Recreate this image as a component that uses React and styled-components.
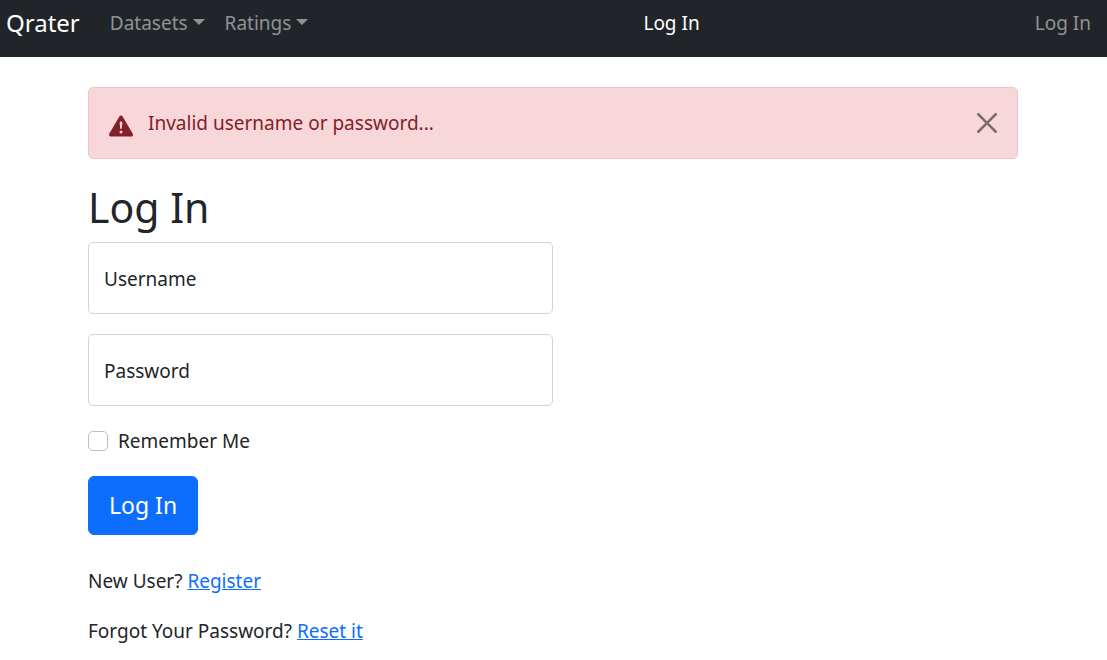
import React from "react";
import styled, { createGlobalStyle } from "styled-components";

const GlobalStyle = createGlobalStyle`
  *, *::before, *::after { box-sizing: border-box; }
  body {
    margin: 0;
    background: #fff;
    color: #212529;
    font-family: "Noto Sans", "Open Sans", sans-serif;
    font-size: 19px;
    line-height: 30px;
  }
  button, input { font: inherit; }
`;

const Navbar = styled.nav`
  display: flex;
  justify-content: space-between;
  align-items: flex-start;
  height: 57px;
  padding: 8px 6px;
  background: #212529;
`;

const NavGroup = styled.div`
  display: flex;
  align-items: center;
`;

const Brand = styled.a`
  margin-right: 20px;
  color: #fff;
  font-size: 24px;
  text-decoration: none;
`;

const NavLink = styled.a`
  padding: 0 10px;
  color: ${({ $active }) => ($active ? "#fff" : "#909294")};
  text-decoration: none;
`;

const NavToggle = styled.button`
  display: flex;
  align-items: center;
  gap: 5px;
  padding: 0 10px;
  border: 0;
  background: none;
  color: #909294;

  &::after {
    content: "";
    margin-bottom: 2px;
    border-top: 6px solid;
    border-right: 6px solid transparent;
    border-left: 6px solid transparent;
  }
`;

const Container = styled.main`
  max-width: 961px;
  margin: 0 auto;
  padding: 30px 16px 0 15px;
`;

const Alert = styled.div`
  display: flex;
  align-items: center;
  gap: 15px;
  padding: 20px;
  border: 1px solid #f5c2c7;
  border-radius: 5px;
  background: #f8d7da;
  color: #842029;

  > svg { flex: none; margin-top: 6px; }
`;

const CloseButton = styled.button`
  display: flex;
  margin-left: auto;
  padding: 0;
  border: 0;
  background: none;
  color: #000;
  opacity: 0.5;
`;

const Title = styled.h1`
  margin: 20px 0 7px;
  font-size: 41px;
  font-weight: 400;
  line-height: 56px;
`;

const Form = styled.form`
  width: 50%;
  min-width: 280px;
`;

const Field = styled.div`
  display: grid;
  margin-bottom: 20px;
  > * { grid-area: 1 / 1; }
`;

const FieldLabel = styled.label`
  align-self: center;
  padding: 2px 16px 0;
  pointer-events: none;
`;

const TextInput = styled.input`
  width: 100%;
  height: 72px;
  padding: 20px 15px;
  border: 1px solid #ced4da;
  border-radius: 5px;
  background: #fff;
  color: #212529;
`;

const CheckRow = styled.div`
  display: flex;
  align-items: center;
  gap: 10px;
`;

const Checkbox = styled.input`
  appearance: none;
  width: 20px;
  height: 20px;
  margin: 0;
  border: 1px solid #bfbfbf;
  border-radius: 5px;
  background: #fff;

  &:checked { background: #0d6efd; }
`;

const SubmitButton = styled.button`
  margin: 20px 0 31px;
  padding: 10px 20px;
  border: 1px solid #0d6efd;
  border-radius: 6px;
  background: #0d6efd;
  color: #fff;
  font-size: 23px;
  line-height: 37px;
`;

const Hint = styled.p`
  margin: 0;

  & + & { margin-top: 20px; }
`;

const TextLink = styled.a`
  color: #0d6efd;
  text-decoration: underline;
`;

function WarningIcon() {
  return (
    <svg width="24" height="24" viewBox="0 0 16 16" fill="currentColor" aria-hidden="true">
      <path d="M8.982 1.566a1.13 1.13 0 0 0-1.96 0L.165 13.233c-.457.778.091 1.767.98 1.767h13.713c.889 0 1.438-.99.98-1.767L8.982 1.566zM8 5c.535 0 .954.462.9.995l-.35 3.507a.552.552 0 0 1-1.1 0L7.1 5.995A.905.905 0 0 1 8 5zm.002 6a1 1 0 1 1 0 2 1 1 0 0 1 0-2z" />
    </svg>
  );
}

function CloseIcon() {
  return (
    <svg width="20" height="20" viewBox="0 0 16 16" fill="currentColor" aria-hidden="true">
      <path d="M.293.293a1 1 0 011.414 0L8 6.586 14.293.293a1 1 0 111.414 1.414L9.414 8l6.293 6.293a1 1 0 01-1.414 1.414L8 9.414l-6.293 6.293a1 1 0 01-1.414-1.414L6.586 8 .293 1.707a1 1 0 010-1.414z" />
    </svg>
  );
}

export default function App() {
  return (
    <>
      <GlobalStyle />
      <Navbar>
        <NavGroup>
          <Brand href="#">Qrater</Brand>
          <NavToggle type="button">Datasets</NavToggle>
          <NavToggle type="button">Ratings</NavToggle>
        </NavGroup>
        <NavLink href="#" $active>Log In</NavLink>
        <NavLink href="#">Log In</NavLink>
      </Navbar>
      <Container>
        <Alert role="alert">
          <WarningIcon />
          <span>Invalid username or password...</span>
          <CloseButton type="button" aria-label="Close">
            <CloseIcon />
          </CloseButton>
        </Alert>
        <Title>Log In</Title>
        <Form onSubmit={(event) => event.preventDefault()}>
          <Field>
            <TextInput id="username" name="username" type="text" />
            <FieldLabel htmlFor="username">Username</FieldLabel>
          </Field>
          <Field>
            <TextInput id="password" name="password" type="password" />
            <FieldLabel htmlFor="password">Password</FieldLabel>
          </Field>
          <CheckRow>
            <Checkbox id="remember" name="remember" type="checkbox" />
            <label htmlFor="remember">Remember Me</label>
          </CheckRow>
          <SubmitButton type="submit">Log In</SubmitButton>
        </Form>
        <Hint>
          New User? <TextLink href="#">Register</TextLink>
        </Hint>
        <Hint>
          Forgot Your Password? <TextLink href="#">Reset it</TextLink>
        </Hint>
      </Container>
    </>
  );
}
